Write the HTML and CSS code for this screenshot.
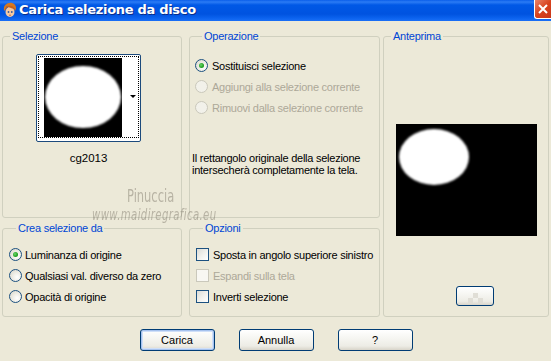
FILE: index.html
```html
<!DOCTYPE html>
<html lang="it">
<head>
<meta charset="UTF-8">
<title>Carica selezione da disco</title>
<link rel="stylesheet" href="styles.css">
</head>
<body>
<div class="window">
  <!-- Title bar -->
  <div class="titlebar">
    <svg class="app-icon" width="16" height="16" viewBox="0 0 16 16">
      <path d="M2 8 C1 3 6 0 10 1 C14 2 15 6 13 9 L12 6 C9 7 6 6 5 4 C4 6 3 7 3 9 Z" fill="#D7781E"/>
      <ellipse cx="8" cy="10" rx="4.5" ry="5" fill="#F6C9A0"/>
      <path d="M3 8 C3 5 6 3 9 4 C11 4 13 6 13 8 C11 6 8 6 6 5 C5 6 4 7 3 8 Z" fill="#C8621A"/>
      <circle cx="6.5" cy="10" r="0.9" fill="#3A5A9A"/>
      <circle cx="9.8" cy="10" r="0.9" fill="#3A5A9A"/>
      <path d="M7 13 Q8 13.8 9 13" stroke="#B0503A" stroke-width="0.8" fill="none"/>
    </svg>
    <span class="title">Carica selezione da disco</span>
    <span class="close">
      <svg width="16" height="18" viewBox="0 0 16 18">
        <path d="M4 5 L12 13 M12 5 L4 13" stroke="#fff" stroke-width="2"/>
      </svg>
    </span>
  </div>

  <div class="body">
    <fieldset class="group sel">
      <legend>Selezione</legend>
      <div class="thumb-col">
        <div class="thumb">
          <div class="thumb-focus">
            <svg class="thumb-img" width="78" height="79" viewBox="0 0 78 79">
              <defs><filter id="soft"><feGaussianBlur stdDeviation="0.8"/></filter></defs>
              <rect width="78" height="79" fill="#000"/>
              <ellipse cx="39" cy="39" rx="38" ry="31" fill="#fff" filter="url(#soft)"/>
            </svg>
            <span class="thumb-arrow"></span>
          </div>
        </div>
        <div class="thumb-name">cg2013</div>
      </div>
    </fieldset>

    <fieldset class="group op">
      <legend>Operazione</legend>
      <div class="opt"><span class="rb on"></span>Sostituisci selezione</div>
      <div class="opt off"><span class="rb"></span>Aggiungi alla selezione corrente</div>
      <div class="opt off"><span class="rb"></span>Rimuovi dalla selezione corrente</div>
      <p class="note">Il rettangolo originale della selezione intersecherà completamente la tela.</p>
    </fieldset>

    <fieldset class="group preview">
      <legend>Anteprima</legend>
      <svg class="preview-img" width="141" height="112" viewBox="0 0 141 112">
        <rect width="141" height="112" fill="#000"/>
        <ellipse cx="38" cy="33" rx="35" ry="28" fill="#fff" filter="url(#soft)"/>
      </svg>
      <button class="btn small"><span class="checker"></span></button>
    </fieldset>

    <fieldset class="group create">
      <legend>Crea selezione da</legend>
      <div class="opt"><span class="rb on"></span>Luminanza di origine</div>
      <div class="opt"><span class="rb"></span>Qualsiasi val. diverso da zero</div>
      <div class="opt"><span class="rb"></span>Opacità di origine</div>
    </fieldset>

    <fieldset class="group options">
      <legend>Opzioni</legend>
      <div class="opt"><span class="cb"></span>Sposta in angolo superiore sinistro</div>
      <div class="opt off"><span class="cb"></span>Espandi sulla tela</div>
      <div class="opt"><span class="cb"></span>Inverti selezione</div>
    </fieldset>
  </div>

  <div class="buttons">
    <button class="btn default">Carica</button>
    <button class="btn">Annulla</button>
    <button class="btn">?</button>
  </div>

  <!-- watermark over the dialog -->
  <div class="wm wm-name">Pinuccia</div>
  <div class="wm wm-site">www.maidiregrafica.eu</div>
</div>
</body>
</html>
```

FILE: styles.css
```css
html, body {
  margin: 0;
  padding: 0;
}

body {
  background: #ECE9D8;
  font-family: "Liberation Sans", Arial, sans-serif;
  font-size: 11px;
  letter-spacing: -0.25px;
  color: #000;
}

.window {
  position: relative;
  width: 551px;
  height: 361px;
  overflow: hidden;
  background: #ECE9D8;
}

/* Title bar */
.titlebar {
  height: 21px;
  display: flex;
  align-items: center;
  padding-left: 2px;
  background: linear-gradient(#0A5EEA 0, #2B7BF5 2px, #0058E6 5px, #0053E0 14px, #0B62EE 18px, #1A6FF6 21px);
  color: #fff;
}

.app-icon {
  flex: 0 0 16px;
  margin-top: -2px;
}

.title {
  margin-left: 1px;
  font-family: "DejaVu Sans", sans-serif;
  font-weight: bold;
  font-size: 13px;
  letter-spacing: -0.3px;
  text-shadow: 1px 1px 0 #0A2D8A;
  flex: 1;
  margin-top: -2px;
}

.close {
  align-self: flex-start;
  width: 16px;
  height: 18px;
  background: linear-gradient(135deg, #E8836A, #D8431E 50%, #C8361A);
  border-left: 1px solid #fff;
  border-bottom: 1px solid #fff;
  border-bottom-left-radius: 3px;
}

.close svg {
  display: block;
}

/* Group boxes */
.body {
  display: grid;
  grid-template-columns: 180px 7px 191px 3px 166px;
  grid-template-rows: 188px 95px;
  row-gap: 4px;
  padding: 9px 0 0 2px;
}

.group {
  margin: 0;
  padding: 0;
  min-width: 0;
  border: 1px solid #D0D0BF;
  border-radius: 3px;
}

.group legend {
  margin-left: 7px;
  padding: 0 2px;
  line-height: 13px;
  color: #0046D5;
}

.sel { grid-column: 1; grid-row: 1; }
.op { grid-column: 3; grid-row: 1; padding: 12px 0 0 5px; }
.preview { grid-column: 5; grid-row: 1 / span 2; }
.create { grid-column: 1; grid-row: 2; padding: 9px 0 0 6px; }
.options { grid-column: 3; grid-row: 2; padding: 9px 0 0 6px; }

/* Selection thumbnail */
.thumb-col {
  width: 103px;
  margin: 11px 0 0 34px;
  display: flex;
  flex-direction: column;
  align-items: center;
}

.thumb {
  width: 101px;
  height: 84px;
  border: 1px solid #1C4A7C;
  border-radius: 2px;
  background: #fff;
  padding: 1px;
}

.thumb-focus {
  height: 80px;
  border: 1px dotted #000;
  display: flex;
  align-items: stretch;
  padding-left: 5px;
}

.thumb-img {
  display: block;
  margin-top: 1px;
}

.thumb-arrow {
  margin: 38px 0 0 8px;
  width: 0;
  height: 0;
  border-left: 3px solid transparent;
  border-right: 3px solid transparent;
  border-top: 3px solid #000;
}

.thumb-name {
  margin-top: 10px;
  font-size: 11.5px;
  letter-spacing: 0;
}

/* Radio / checkbox rows */
.opt {
  height: 21px;
  display: flex;
  align-items: center;
  white-space: nowrap;
}

.opt.off {
  color: #ACA899;
}

.rb {
  flex: 0 0 auto;
  width: 11px;
  height: 11px;
  margin-right: 4px;
  border: 1px solid #1C5180;
  border-radius: 50%;
  background: radial-gradient(circle at 65% 65%, #FFFFFF 0, #F0EFE8 40%, #D6D3C6 100%);
  display: flex;
  align-items: center;
  justify-content: center;
}

.rb.on::after {
  content: "";
  width: 5px;
  height: 5px;
  border-radius: 50%;
  background: radial-gradient(circle at 40% 40%, #6BD56B, #21A121 60%, #1B8A1B);
}

.off .rb {
  border-color: #CAC8BB;
  background: #F2F1EA;
}

.create .rb {
  margin-right: 3px;
}

.cb {
  flex: 0 0 auto;
  width: 11px;
  height: 11px;
  margin-right: 4px;
  border: 1px solid #1C5180;
  background: linear-gradient(135deg, #DCDCD7, #F4F4F0 60%, #FFFFFF);
}

.off .cb {
  border-color: #CAC8BB;
  background: #F8F7F2;
}

.note {
  margin: 34px 0 0 -3px;
  line-height: 12px;
  width: 185px;
}

/* Preview */
.preview-img {
  display: block;
  margin: 81px 0 0 12px;
}

.btn {
  font-family: "Liberation Sans", Arial, sans-serif;
  font-size: 11px;
  color: #000;
  width: 75px;
  height: 22px;
  padding: 0;
  border: 1px solid #003C74;
  border-radius: 3px;
  background: linear-gradient(#FFFFFF 0, #F6F6F2 40%, #EDECE5 80%, #D8D4C9 100%);
}

.btn.default {
  box-shadow: inset 0 0 0 1px #A6C2EE, inset 0 0 0 2px #CFDFF8;
}

.btn.small {
  display: block;
  width: 38px;
  height: 20px;
  margin: 50px 0 0 72px;
}

.checker {
  display: block;
  margin: 3px auto 0;
  width: 15px;
  height: 10px;
  background:
    linear-gradient(90deg, transparent 5px, #E0DED6 5px, #E0DED6 10px, transparent 10px) 0 0 / 15px 5px no-repeat,
    linear-gradient(90deg, #E0DED6 5px, transparent 5px, transparent 10px, #E0DED6 10px) 0 5px / 15px 5px no-repeat;
}

/* Dialog buttons */
.buttons {
  display: flex;
  justify-content: center;
  gap: 24px;
  margin-top: 12px;
  padding-left: 1px;
}

/* Watermark */
.wm {
  position: absolute;
  color: rgba(120, 114, 100, 0.45);
  font-family: "DejaVu Sans Condensed", "DejaVu Sans", sans-serif;
  font-stretch: condensed;
  letter-spacing: 0;
  pointer-events: none;
}

.wm-name {
  left: 127px;
  top: 186px;
  font-size: 17px;
  line-height: 20px;
  transform: scaleX(0.75);
  transform-origin: left top;
}

.wm-site {
  left: 92px;
  top: 210px;
  font-size: 15px;
  line-height: 11px;
  font-style: italic;
  letter-spacing: 0.5px;
  transform: scaleX(0.75);
  transform-origin: left top;
}
```
